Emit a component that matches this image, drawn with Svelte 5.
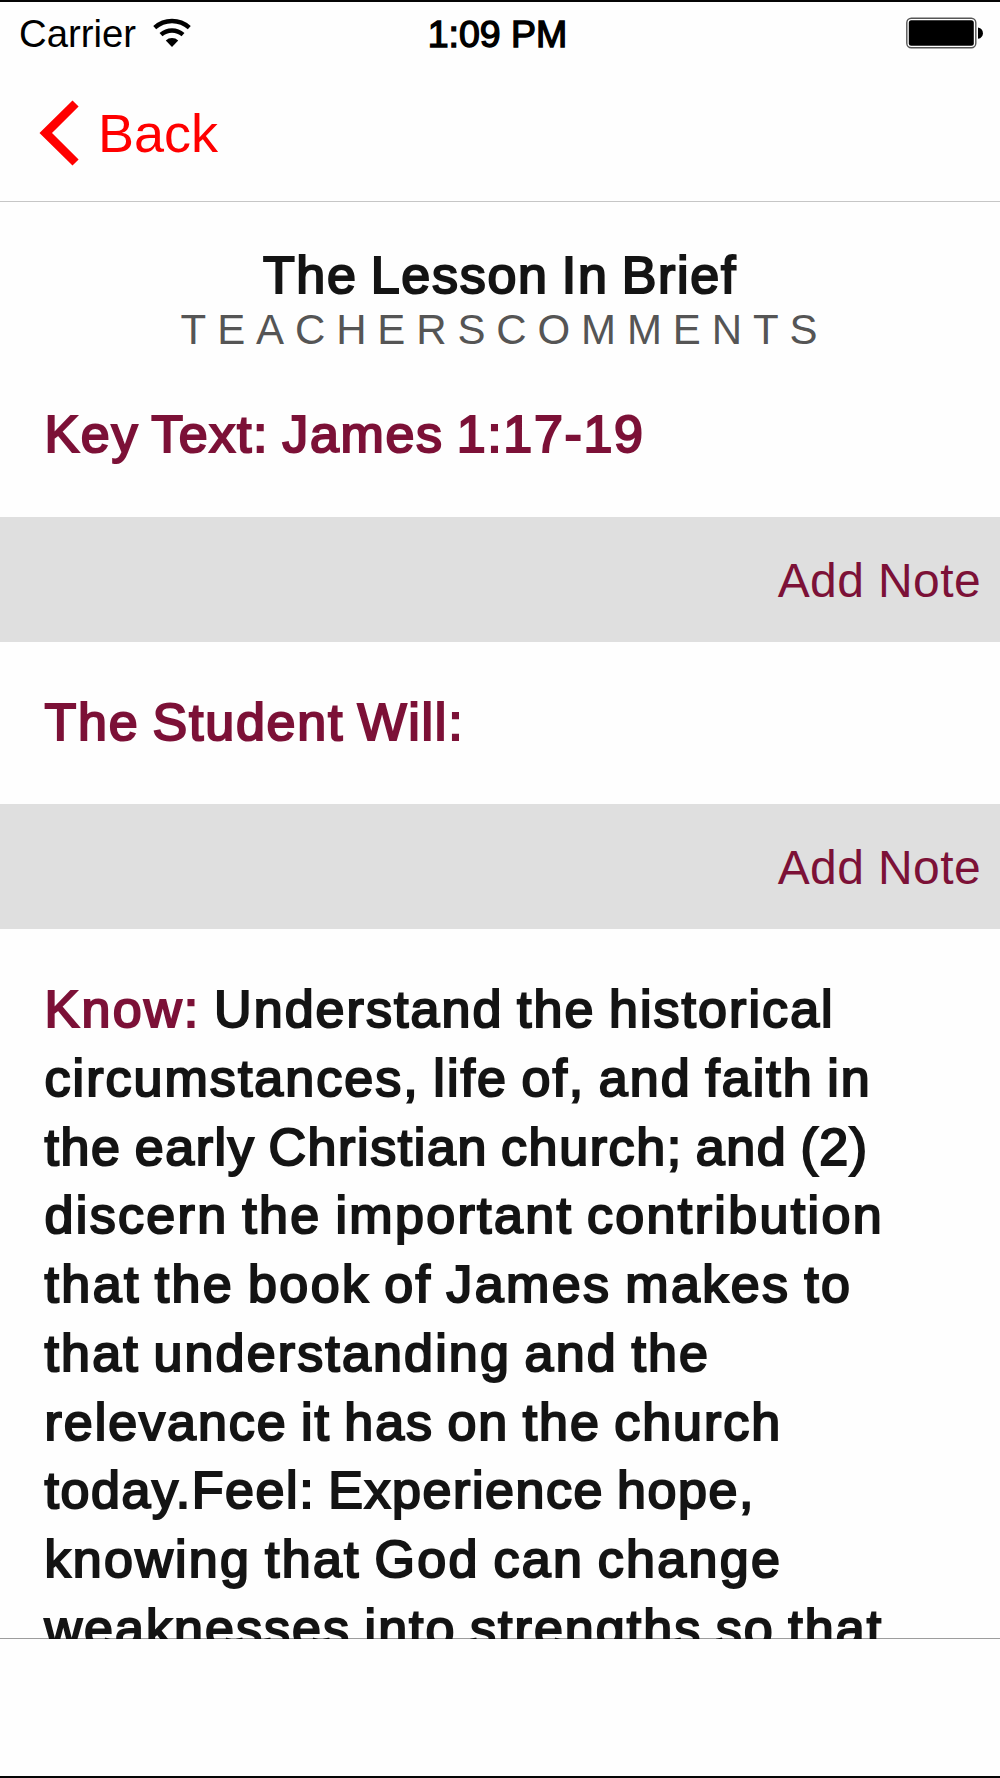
<script lang="ts">
	type Line = { label?: string; text: string; spacing: number };

	const headings = [
		{ text: 'Key Text: James 1:17-19', spacing: 1.64 },
		{ text: 'The Student Will:', spacing: 1.76 }
	];

	// letter spacing is tuned for every line
	const body: Line[] = [
		{ label: 'Know:', text: ' Understand the historical', spacing: 2.06 },
		{ text: 'circumstances, life of, and faith in', spacing: 2.04 },
		{ text: 'the early Christian church; and (2)', spacing: 1.6 },
		{ text: 'discern the important contribution', spacing: 2.34 },
		{ text: 'that the book of James makes to', spacing: 2.4 },
		{ text: 'that understanding and the', spacing: 2.15 },
		{ text: 'relevance it has on the church', spacing: 1.96 },
		{ text: 'today.Feel: Experience hope,', spacing: 1.57 },
		{ text: 'knowing that God can change', spacing: 2.28 },
		{ text: 'weaknesses into strengths so that,', spacing: 2.04 }
	];
</script>

<div class="phone">
	<div class="status">
		<div class="carrier">
			<span>Carrier</span>
			<svg class="wifi" viewBox="0 0 40 30" width="40" height="30">
				<path d="M2.7 9.6A26 26 0 0 1 37.3 9.6" />
				<path d="M9 16.7A16.5 16.5 0 0 1 31 16.7" />
				<path class="dot" d="M13.8 22.6A9 9 0 0 1 26.2 22.6L20 29Z" />
			</svg>
		</div>
		<span class="time">1:09 PM</span>
		<svg class="battery" viewBox="0 0 78 32" width="78" height="32">
			<rect class="shell" x="0.8" y="1.3" width="69" height="29.4" rx="4.5" />
			<rect x="2.8" y="3.2" width="65" height="25.6" rx="2.5" />
			<path d="M72 10.5C78.6 11.5 78.6 20.8 72 21.8Z" />
		</svg>
	</div>

	<nav>
		<button class="back">
			<svg viewBox="0 0 40 66" width="40" height="66">
				<path d="M33.5 0.5L39.6 6.5L13 33L39.6 59.5L33.5 65.5L0.5 33Z" />
			</svg>
			<span>Back</span>
		</button>
	</nav>

	<main>
		<header>
			<h1>The Lesson In Brief</h1>
			<h2>TEACHERSCOMMENTS</h2>
		</header>

		{#each headings as heading, i}
			<section class:first={i === 0}>
				<h3 style="letter-spacing: {heading.spacing}px">{heading.text}</h3>
			</section>
			<div class="note">
				<button>Add Note</button>
			</div>
		{/each}

		<section>
			{#each body as line}
				<p style="letter-spacing: {line.spacing}px">
					{#if line.label}<b>{line.label}</b>{/if}{line.text}
				</p>
			{/each}
		</section>
	</main>

	<footer></footer>
</div>

<style>
	:global(body) {
		background: #fefefe;
	}

	.phone {
		display: flex;
		flex-direction: column;
		box-sizing: border-box;
		width: 1000px;
		height: 1778px;
		overflow: hidden;
		border-top: 2px solid #050505;
		border-bottom: 2px solid #050505;
		background: #fefefe;
		font-family: 'Liberation Sans', Arial, sans-serif;
		color: #141414;
	}

	.status {
		display: grid;
		grid-template-columns: 1fr auto 1fr;
		align-items: center;
		flex: none;
		height: 62px;
		padding: 0 16px 0 19px;
		color: #000;
		font-size: 38.3px;
		line-height: 60px;
	}

	.status span {
		padding-top: 2px;
	}

	.carrier {
		display: flex;
		align-items: center;
		gap: 16px;
	}

	.wifi path {
		fill: none;
		stroke: #000;
		stroke-width: 4.4;
	}

	.wifi .dot {
		fill: #000;
		stroke: none;
	}

	.status .time {
		padding-right: 8px;
		font-size: 37.5px;
		-webkit-text-stroke: 1.4px #000;
	}

	.battery {
		justify-self: end;
	}

	.battery .shell {
		fill: #fff;
		stroke: #555;
		stroke-width: 1.4;
	}

	nav {
		display: flex;
		align-items: center;
		flex: none;
		box-sizing: border-box;
		height: 138px;
		padding-left: 38.5px;
		border-bottom: 1px solid #c6c6c6;
	}

	button {
		border: none;
		background: none;
		padding: 0;
		font-family: inherit;
	}

	.back {
		display: flex;
		align-items: center;
		gap: 19.5px;
		color: #f00;
		font-size: 54px;
		line-height: 66px;
	}

	.back svg {
		fill: #f00;
	}

	main {
		flex: none;
		height: 1437px;
		overflow: hidden;
	}

	header {
		padding: 43px 0 0;
		text-align: center;
	}

	h1,
	h2,
	h3,
	p {
		margin: 0;
		font-weight: normal;
		white-space: nowrap;
	}

	h1,
	h3,
	p {
		font-size: 52px;
		word-spacing: -3px;
		-webkit-text-stroke: 2.1px currentColor;
	}

	h1 {
		line-height: 60px;
		letter-spacing: 1.7px;
	}

	h2 {
		color: #555;
		font-size: 42px;
		line-height: 50px;
		letter-spacing: 10.88px;
		text-indent: 9px;
	}

	h3,
	p {
		line-height: 68.75px;
	}

	h3,
	b {
		color: #7c1137;
	}

	b {
		font-weight: normal;
		letter-spacing: 2.3px;
	}

	section {
		padding: 45.75px 44.5px 48px;
	}

	.first {
		padding-top: 45px;
	}

	.note {
		display: flex;
		align-items: center;
		justify-content: flex-end;
		box-sizing: border-box;
		height: 125px;
		padding: 3px 19px 0 0;
		background: #dfdfdf;
	}

	.note button {
		color: #7c1137;
		font-size: 48px;
		line-height: 60px;
		letter-spacing: 0.4px;
	}

	/* the hairline lies over the last row of the scrolled text */
	footer {
		position: relative;
		flex: 1;
		margin-top: -1px;
		border-top: 1px solid rgba(0, 0, 0, 0.38);
	}
</style>
